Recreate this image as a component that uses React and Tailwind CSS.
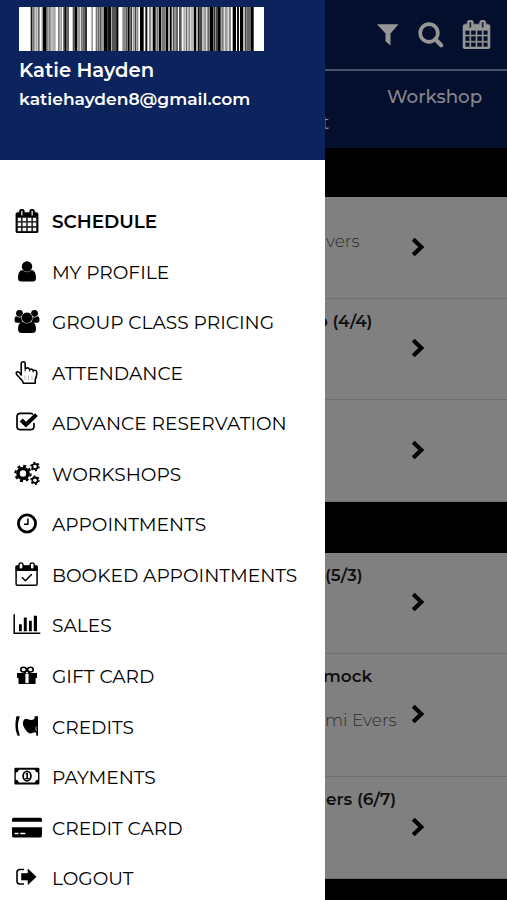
import React from "react";

const CalendarIcon = ({ className }) => (
  <svg viewBox="0 0 1792 1792" fill="currentColor" stroke="currentColor" strokeWidth="36" className={className}>
    <path d="M192 1664h288v-288h-288v288zm352 0h320v-288h-320v288zm-352-352h288v-320h-288v320zm352 0h320v-320h-320v320zm-352-384h288v-288h-288v288zm736 736h320v-288h-320v288zm-384-736h320v-288h-320v288zm768 736h288v-288h-288v288zm-384-352h320v-320h-320v320zm-352-864v-288q0-13-9.5-22.5t-22.5-9.5h-64q-13 0-22.5 9.5t-9.5 22.5v288q0 13 9.5 22.5t22.5 9.5h64q13 0 22.5-9.5t9.5-22.5zm736 864h288v-320h-288v320zm-384-384h320v-288h-320v288zm384 0h288v-288h-288v288zm32-480v-288q0-13-9.5-22.5t-22.5-9.5h-64q-13 0-22.5 9.5t-9.5 22.5v288q0 13 9.5 22.5t22.5 9.5h64q13 0 22.5-9.5t9.5-22.5zm384-64v1280q0 52-38 90t-90 38h-1408q-52 0-90-38t-38-90v-1280q0-52 38-90t90-38h128v-96q0-66 47-113t113-47h64q66 0 113 47t47 113v96h384v-96q0-66 47-113t113-47h64q66 0 113 47t47 113v96h128q52 0 90 38t38 90z" />
  </svg>
);

const UserIcon = () => (
  <g>
    <circle cx="15" cy="9.5" r="5.2" />
    <path d="M10.2 13.1Q6 14 6 21Q6 24.5 9.2 24.5H20.8Q24 24.5 24 21Q24 14 19.8 13.1Q15 17.3 10.2 13.1Z" />
  </g>
);

const GroupIcon = () => (
  <g>
    <circle cx="7.5" cy="6.3" r="3.4" />
    <circle cx="22.5" cy="6.3" r="3.4" />
    <path d="M4.5 9.3Q2.5 9.3 2.5 13.3Q2.5 15.8 5 15.8H10V9.8Q7 11.3 4.5 9.3ZM25.5 9.3Q27.5 9.3 27.5 13.3Q27.5 15.8 25 15.8H20V9.8Q23 11.3 25.5 9.3Z" />
    <circle cx="15" cy="10.8" r="5.6" stroke="white" strokeWidth="0.5" />
    <path d="M10.3 14.8Q6 15.3 6 22.3Q6 26 9.5 26H20.5Q24 26 24 22.3Q24 15.3 19.7 14.8Q15 18.3 10.3 14.8Z" />
  </g>
);

const HandIcon = () => (
  <g fill="none" stroke="currentColor" strokeWidth="1.6" strokeLinejoin="round">
    <path d="M9.2 17V5.8Q9.2 3.7 11.2 3.7Q13.2 3.7 13.2 5.8V10.5Q16.2 9 17.6 11.5Q20 10.3 21.2 12.5Q24.8 11.5 24.8 15Q24.8 18.5 23.2 21.5V25.2H11.5Q10.8 22.3 7.6 19.8L4.6 16.5Q3.6 14.5 5.3 13.8Q7 13.3 9.2 17Z" />
    <path d="M13.2 10.5V13.5M17.6 11.5V13.5M21.2 12.5V14.5" strokeWidth="1" />
    <path d="M13 17.5V22M16.5 17.5V22M20 17.5V22" strokeWidth="0.7" opacity="0.35" />
  </g>
);

const CheckSquareIcon = () => (
  <g>
    <path
      d="M20.5 6Q19.8 5.3 18 5.3H8.5Q5 5.3 5 8.8V18.2Q5 21.7 8.5 21.7H18.5Q22 21.7 22 18.2V15.5"
      fill="none"
      stroke="currentColor"
      strokeWidth="1.7"
      strokeLinecap="round"
    />
    <path d="M7.6 13.5L10.7 10.5L14 13.8L23 5.2L25.8 8.1L14 19.6Z" />
  </g>
);

const CogsIcon = () => (
  <g fill="none" stroke="currentColor">
    <circle cx="11" cy="14.5" r="5" strokeWidth="3.6" />
    <circle cx="11" cy="14.5" r="7.6" strokeWidth="2.2" strokeDasharray="3 2.97" />
    <circle cx="23" cy="7.5" r="2.7" strokeWidth="1.8" />
    <circle cx="23" cy="7.5" r="4" strokeWidth="1.5" strokeDasharray="1.9 2.29" />
    <circle cx="23" cy="21.2" r="2.7" strokeWidth="1.8" />
    <circle cx="23" cy="21.2" r="4" strokeWidth="1.5" strokeDasharray="1.9 2.29" />
  </g>
);

const ClockIcon = () => (
  <g fill="none" stroke="currentColor">
    <circle cx="15" cy="14.5" r="8.6" strokeWidth="2.8" />
    <path d="M15.9 9.5V15.3H12" strokeWidth="1.5" />
  </g>
);

const BookedIcon = () => (
  <g>
    <rect x="4.1" y="6" width="21" height="19.3" rx="1.3" fill="none" stroke="currentColor" strokeWidth="1.5" />
    <path d="M3.6 5.7H25.6V11H3.6Z" />
    <rect x="7" y="2.9" width="4" height="6.4" rx="2" fill="white" stroke="currentColor" strokeWidth="1.4" />
    <rect x="18.2" y="2.9" width="4" height="6.4" rx="2" fill="white" stroke="currentColor" strokeWidth="1.4" />
    <path d="M10 17.3L13.4 20.7L19.8 14.3" fill="none" stroke="currentColor" strokeWidth="1.6" />
  </g>
);

const ChartIcon = () => (
  <g>
    <path d="M2.2 4.2V23.2H28.3" fill="none" stroke="currentColor" strokeWidth="1.5" />
    <path d="M7 14.3H9.8V21.3H7ZM11.8 7.4H14.8V21.3H11.8ZM17 10.8H19.8V21.3H17ZM21.8 5.7H25V21.3H21.8Z" />
  </g>
);

const GiftIcon = () => (
  <g>
    <path d="M5 12H25V17H5ZM6.5 17H23.6V22.2Q23.6 23 22.8 23H7.3Q6.5 23 6.5 22.2Z" />
    <rect x="13.4" y="12.6" width="3.2" height="9.5" fill="white" />
    <g fill="none" stroke="currentColor" strokeWidth="1.6">
      <ellipse cx="11.6" cy="8.6" rx="2.8" ry="2.4" />
      <ellipse cx="18.4" cy="8.6" rx="2.8" ry="2.4" />
      <path d="M15 9.3L12 12.5M15 9.3L18 12.5" />
    </g>
  </g>
);

const CreditsIcon = () => (
  <g>
    <path d="M7.6 4.3V5.6Q5.9 10 5.9 14Q5.9 18 7.6 22.4V23.8H5.6Q3.4 19 3.4 14Q3.4 9 4.4 4.3Z" />
    <path d="M11.5 8.5Q12.8 6 16 7.3Q19.8 8.8 22.5 6.7V4.3H26V23.8H24.3V20.8Q22.5 19.4 20.5 21Q17.5 22.3 15.3 20Q12.5 17 11.2 13.5Q10.5 10.5 11.5 8.5Z" />
    <path d="M24.4 14.5Q23.2 16.7 24.4 19" fill="none" stroke="white" strokeWidth="0.7" />
  </g>
);

const MoneyIcon = () => (
  <g>
    <rect x="2.4" y="5.7" width="25" height="16.8" rx="1" />
    <path d="M7 7.8H22.8Q23.4 10.1 26 10.8V17.4Q23.4 18.1 22.8 20.4H7Q6.4 18.1 3.8 17.4V10.8Q6.4 10.1 7 7.8Z" fill="white" />
    <ellipse cx="15" cy="14.1" rx="4.8" ry="5.6" />
    <ellipse cx="15" cy="14.1" rx="3" ry="4" fill="white" />
    <path d="M13.2 12L14.7 10.5H16V16.1H17.3V17.3H13.1V16.1H14.4V12.5Z" />
  </g>
);

const CardIcon = () => (
  <g>
    <path d="M0 8.7V6.4Q0 4.7 1.7 4.7H28.3Q30 4.7 30 6.4V8.7ZM0 14.3H30V22.5Q30 24.4 28.3 24.4H1.7Q0 24.4 0 22.5Z" />
    <path d="M2.7 20.5H6.5M8.3 20.5H13.3" stroke="white" strokeWidth="1.4" />
  </g>
);

const LogoutIcon = () => (
  <g>
    <path d="M12 6.5H8Q5 6.5 5 9.3V18.2Q5 21 8 21H12" fill="none" stroke="currentColor" strokeWidth="1.6" />
    <path d="M9.5 10.5H16V6L24.2 13.8L16 21.5V17H9.5Z" strokeLinejoin="round" stroke="currentColor" strokeWidth="0.6" />
  </g>
);

const menu = [
  { label: "SCHEDULE", active: true },
  { label: "MY PROFILE", icon: UserIcon },
  { label: "GROUP CLASS PRICING", icon: GroupIcon },
  { label: "ATTENDANCE", icon: HandIcon },
  { label: "ADVANCE RESERVATION", icon: CheckSquareIcon },
  { label: "WORKSHOPS", icon: CogsIcon },
  { label: "APPOINTMENTS", icon: ClockIcon },
  { label: "BOOKED APPOINTMENTS", icon: BookedIcon },
  { label: "SALES", icon: ChartIcon },
  { label: "GIFT CARD", icon: GiftIcon },
  { label: "CREDITS", icon: CreditsIcon },
  { label: "PAYMENTS", icon: MoneyIcon },
  { label: "CREDIT CARD", icon: CardIcon },
  { label: "LOGOUT", icon: LogoutIcon },
];

// [x, width, shade]
const bars = [
  [35, 5, "#111"], [40, 7, "#777"], [49, 5, "#aaa"], [56, 6, "#666"], [66, 4, "#ccc"],
  [71, 12, "#000"], [83, 6, "#888"], [90, 5, "#777"], [97, 4, "#999"], [102, 8, "#aaa"],
  [117, 5, "#777"], [124, 5, "#999"], [132, 4, "#777"], [136, 5, "#000"], [141, 9, "#666"],
  [161, 6, "#555"], [167, 8, "#000"], [176, 8, "#999"], [186, 4, "#777"], [190, 8, "#666"],
  [198, 6, "#333"], [217, 5, "#999"], [230, 6, "#777"], [237, 5, "#666"], [243, 5, "#555"],
  [248, 5, "#999"], [254, 12, "#000"], [266, 11, "#111"], [279, 14, "#555"], [292, 6, "#000"],
  [310, 10, "#888"], [320, 5, "#555"], [326, 6, "#000"], [334, 5, "#333"], [341, 5, "#999"],
  [347, 5, "#444"], [353, 5, "#888"], [363, 11, "#000"], [379, 6, "#111"], [390, 7, "#888"],
  [401, 9, "#000"], [412, 7, "#777"], [420, 6, "#000"], [427, 12, "#777"], [440, 8, "#000"],
  [452, 6, "#000"], [461, 6, "#555"], [469, 8, "#666"], [480, 8, "#555"], [493, 5, "#aaa"],
  [500, 5, "#666"], [508, 6, "#888"], [517, 4, "#999"], [524, 8, "#000"], [536, 6, "#111"],
  [542, 8, "#444"], [553, 9, "#999"], [565, 6, "#666"], [572, 10, "#000"], [583, 6, "#333"],
  [590, 7, "#444"], [597, 8, "#000"], [607, 7, "#777"], [617, 9, "#999"], [629, 7, "#888"],
  [641, 10, "#000"], [654, 6, "#111"], [663, 10, "#000"], [677, 5, "#444"], [682, 13, "#666"],
  [695, 9, "#000"],
];

const Chevron = () => (
  <svg viewBox="0 0 14 20" className="mb-[2px] ml-[86px] h-5 w-[14px] shrink-0 text-black">
    <path d="M2.2 2.2L10.3 10L2.2 17.8" fill="none" stroke="currentColor" strokeWidth="4.2" />
  </svg>
);

const ClassRow = ({ title, teacher, height, titleClass, teacherClass }) => (
  <div className={`relative flex items-center border-b border-[#707070] ${height}`}>
    <Chevron />
    {title && (
      <span className={`absolute left-0 top-[9.5px] whitespace-nowrap text-[16.9px] leading-6 font-semibold text-black/90 ${titleClass}`}>
        {title}
      </span>
    )}
    {teacher && (
      <span className={`absolute left-0 whitespace-nowrap text-[17px] leading-6 font-light text-[#2e2e2e] ${teacherClass}`}>
        {teacher}
      </span>
    )}
  </div>
);

const Drawer = () => (
  <aside className="h-full w-[325px] shrink-0 bg-white">
    <div className="h-[160px] bg-[#0c235e] pl-[19px] pt-[7px] text-white">
      <svg viewBox="0 0 735 132" preserveAspectRatio="none" className="h-11 w-[245px]">
        <rect width="735" height="132" fill="white" />
        {bars.map(([x, w, shade]) => (
          <rect key={x} x={x} width={w} height="132" fill={shade} />
        ))}
      </svg>
      <div className="mt-[7px] w-fit text-[19.6px] leading-6 font-semibold">Katie Hayden</div>
      <div className="mt-[5px] w-fit text-[17.1px] leading-6 font-semibold">
        katiehayden8@gmail.com
      </div>
    </div>
    <nav className="pt-[36.7px]">
      {menu.map(({ label, icon: Icon, active }) => (
        <div key={label} className="flex h-[50.57px] items-center pl-3">
          <div className="-ml-[0.5px] mb-[2px] flex h-[30px] w-[30px] items-center justify-center">
            {Icon ? (
              <svg viewBox="0 0 30 30" fill="currentColor" className="h-[30px] w-[30px]">
                <Icon />
              </svg>
            ) : (
              <CalendarIcon className="h-6 w-6" />
            )}
          </div>
          <span
            className={`ml-[10.5px] whitespace-nowrap leading-6 ${
              active ? "text-[18.4px] font-semibold" : "text-[18.6px] font-normal"
            }`}
          >
            {label}
          </span>
        </div>
      ))}
    </nav>
  </aside>
);

const App = () => {
  return (
    <div className="flex h-[900px] w-[507px] overflow-hidden bg-black font-['Montserrat','Inter',sans-serif] text-black">
      <Drawer />
      <main className="min-w-0 flex-1 overflow-hidden bg-black">
        <div className="flex h-[71px] items-start border-b-2 border-[#46516a] bg-[#040f2d] pl-[51px] text-[#969696]">
          <svg viewBox="0 0 24 24" fill="currentColor" className="mt-[23px] h-6 w-6">
            <path d="M1 1.3H22.5L14.5 10.5V22.5L9.5 18.3V10.5Z" />
          </svg>
          <svg viewBox="0 0 28 28" className="ml-[17px] mt-[21px] h-7 w-7">
            <circle cx="12" cy="12" r="8.8" fill="none" stroke="currentColor" strokeWidth="3.7" />
            <path d="M18.3 18.3L24.2 24.2" stroke="currentColor" strokeWidth="4.3" strokeLinecap="round" />
          </svg>
          <CalendarIcon className="ml-[17px] mt-[19.5px] h-[29px] w-[29px]" />
        </div>
        <div className="h-[77px] bg-[#040f2d] pt-[13.5px] text-[#858790]">
          <div className="pl-[62px] text-[18.3px] leading-6 font-medium">Workshop</div>
          <div className="-ml-[3px] mt-[2px] text-[18px] leading-6">t</div>
        </div>
        <div className="mt-[49px] bg-[#808080]">
          <ClassRow height="h-[102px]" teacher="vers" teacherClass="top-[32px] ml-px" />
          <ClassRow height="h-[101px]" title="o (4/4)" titleClass="-ml-[8px]" />
          <ClassRow height="h-[102px]" />
        </div>
        <div className="mt-[51px] bg-[#808080]">
          <ClassRow height="h-[101px]" title="(5/3)" />
          <ClassRow height="h-[123px]" title="mock" teacher="mi Evers" titleClass="-ml-[2px]" teacherClass="top-[54px]" />
          <ClassRow height="h-[102px]" title="ers (6/7)" titleClass="ml-px" />
        </div>
      </main>
    </div>
  );
};

export default App;
